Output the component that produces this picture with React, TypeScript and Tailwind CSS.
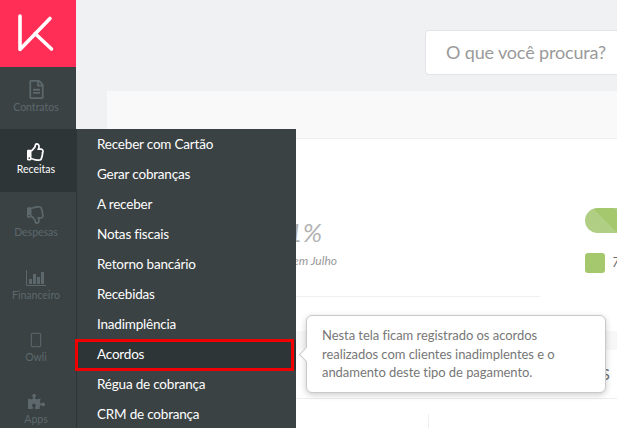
import { Smartphone } from "lucide-react";
import { FaPuzzlePiece, FaRegFileAlt, FaRegThumbsDown, FaRegThumbsUp } from "react-icons/fa";

const BarsIcon = () => (
  <svg width="20" height="16" viewBox="0 0 20 16" fill="none">
    <path d="M.5 0v15.5H20" stroke="currentColor" />
    <rect x="3" y="9" width="3" height="5" fill="currentColor" />
    <rect x="7" y="4" width="3" height="10" fill="currentColor" />
    <rect x="11" y="7" width="3" height="7" fill="currentColor" />
    <rect x="15" y="2" width="3" height="12" fill="currentColor" />
  </svg>
);

const LogoK = () => (
  <svg width="37" height="40" viewBox="0 0 37 40" fill="none">
    <path
      d="M2 2V35.5L32 4.5M17 19.5L33.5 35"
      stroke="white"
      strokeWidth="3.6"
      strokeLinecap="round"
      strokeLinejoin="round"
    />
  </svg>
);

const navItems = [
  { label: "Contratos", icon: <FaRegFileAlt size={19} />, h: "h-[62px]" },
  { label: "Receitas", icon: <FaRegThumbsUp size={18} />, h: "h-[63px]", active: true },
  { label: "Despesas", icon: <FaRegThumbsDown size={18} />, h: "h-[63px]" },
  { label: "Financeiro", icon: <BarsIcon />, h: "h-[62px]" },
  { label: "Owli", icon: <Smartphone size={16} strokeWidth={1.6} />, h: "h-[62px]" },
  { label: "Apps", icon: <FaPuzzlePiece size={17} />, h: "h-[62px]" },
];

const menuItems = [
  "Receber com Cartão",
  "Gerar cobranças",
  "A receber",
  "Notas fiscais",
  "Retorno bancário",
  "Recebidas",
  "Inadimplência",
  "Acordos",
  "Régua de cobrança",
  "CRM de cobrança",
];

export default function App() {
  return (
    <div className="relative flex h-[428px] w-[617px] overflow-hidden bg-[#f0f1f3] font-['Lato','Liberation_Sans',sans-serif]">
      {/* Sidebar */}
      <aside className="flex w-[76px] shrink-0 flex-col overflow-hidden bg-[#3a4244]">
        <div className="flex h-[67px] shrink-0 items-center justify-center bg-[#ff2e57] pr-[3px]">
          <LogoK />
        </div>
        {navItems.map((item) => (
          <div
            key={item.label}
            className={`flex ${item.h} shrink-0 flex-col items-center pr-[4px] pt-[11px] text-[10.5px] leading-[12px] ${
              item.active ? "bg-[#2e3537] text-white" : "text-[#5d686c]"
            }`}
          >
            <span className="flex h-[23px] items-center justify-center">{item.icon}</span>
            {item.label}
          </div>
        ))}
      </aside>

      {/* Main */}
      <main className="flex min-w-0 flex-1 flex-col">
        <header className="flex h-[91px] shrink-0 pl-[349px] pt-[30px]">
          <div className="flex h-[45px] w-[260px] shrink-0 items-center rounded-[4px] border border-[#e2e4e7] bg-white pl-[20px] text-[18px] tracking-[-0.15px] text-[#9a9a9a]">
            O que você procura?
          </div>
        </header>
        <div className="ml-[31px] flex flex-1 flex-col bg-white">
          <div className="h-[48px] shrink-0 border-b border-[#eeeeee] bg-[#f9f9f9]" />
          <div className="flex h-[158px] shrink-0">
            <div className="flex w-[433px] shrink-0 flex-col items-end border-b border-[#f0f0f0] pr-[203px] pt-[76px] italic text-[#b3b3b3]">
              <span className="mr-[15px] text-[26px] leading-[34px]">71%</span>
              <span className="mt-[4px] text-[12px] leading-[16px] text-[#999999]">Recebido em Julho</span>
            </div>
            <div className="ml-[45px] flex flex-1 flex-col pt-[69px]">
              <div className="h-[25px] rounded-l-full bg-[linear-gradient(45deg,#b0cf85_55%,#a5c86f_55%,#a5c86f_90%,#b0cf85_90%)]" />
              <div className="mt-[20px] flex items-center gap-[7px]">
                <span className="h-[20px] w-[20px] shrink-0 rounded-[3px] bg-[#a5c86f]" />
                <span className="text-[13px] italic text-[#666666]">7</span>
              </div>
            </div>
          </div>
          <div className="mt-[34px] h-[68px] shrink-0 border-b border-[#eeeeee] bg-[linear-gradient(#f7f7f8_0,#f7f7f8_19px,#ffffff_19px)] pr-[7px] pt-[33px] text-right text-[16px] leading-[20px] text-[#777777]">
            S
          </div>
          <div className="ml-[321px] mt-[15px] flex-1 border-l border-[#eeeeee]" />
        </div>
      </main>

      {/* Dropdown of Receitas */}
      <nav className="absolute left-[76px] top-[129px] h-[299px] w-[220px] border-l border-[#2e3537] bg-[#3a4244] pt-px">
        {menuItems.map((m) => (
          <div
            key={m}
            className={`flex h-[30px] items-center pb-[2px] pl-[20px] text-[13.5px] tracking-[-0.2px] text-white ${
              m === "Acordos" ? "bg-[#2e3537]" : ""
            }`}
          >
            {m}
          </div>
        ))}
      </nav>

      {/* Red highlight */}
      <div className="absolute left-[75px] top-[339px] h-[32px] w-[219px] border-[3px] border-[#f00000]" />

      {/* Tooltip */}
      <div className="absolute left-[306px] top-[315px] h-[78px] w-[300px] rounded-[6px] border border-[#c9c9c9] bg-white pl-[15px] pt-[10px] text-[13px] leading-[18.5px] tracking-[-0.05px] text-[#777777] shadow-[0_2px_6px_rgba(0,0,0,0.2)]">
        <span className="absolute left-[-6px] top-[33px] h-[11px] w-[11px] rotate-45 border-b border-l border-[#c9c9c9] bg-white" />
        Nesta tela ficam registrado os acordos
        <br />
        realizados com clientes inadimplentes e o
        <br />
        andamento deste tipo de pagamento.
      </div>
    </div>
  );
}
